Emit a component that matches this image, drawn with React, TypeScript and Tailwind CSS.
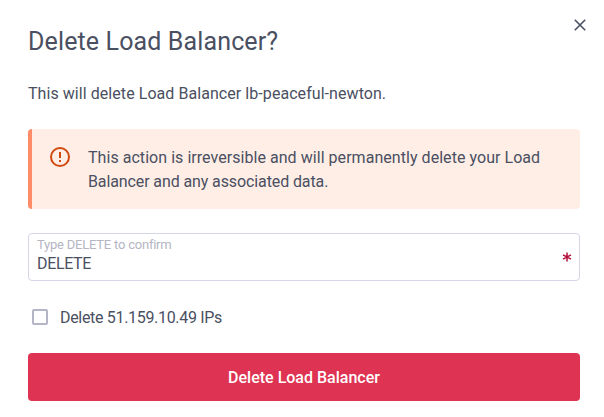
import { useState } from "react";

function CloseIcon() {
  return (
    <svg width="12" height="12" viewBox="0 0 12 12" fill="none" stroke="#4a4f62" strokeWidth="1.6">
      <path d="M0.8 0.8 11.2 11.2M11.2 0.8 0.8 11.2" />
    </svg>
  );
}

function AlertIcon() {
  return (
    <svg width="20" height="20" viewBox="0 0 20 20" fill="none" stroke="#d1490f" strokeWidth="2">
      <circle cx="10" cy="10" r="9" />
      <path d="M10 5v6M10 13v2" />
    </svg>
  );
}

export default function App() {
  const [value, setValue] = useState("DELETE");

  return (
    <div className="relative h-[417px] w-[604px] bg-white pt-[24px] pr-[24px] pl-[28px] font-['Roboto',sans-serif] text-[16px] leading-[24px] text-[#4a4f62]">
      <button aria-label="Close" className="absolute top-[19px] right-[18px]">
        <CloseIcon />
      </button>
      <h1 className="text-[25px] leading-[36px] tracking-[0.13px] whitespace-nowrap">
        <span>Delete Load Balancer?</span>
      </h1>
      <p className="mt-[22px] tracking-[0.06px] whitespace-nowrap">
        This will delete Load Balancer lb-peaceful-newton.
      </p>

      <div className="mt-[23px] flex h-[80px] rounded-[4px] border-l-4 border-[#ff8c69] bg-[#ffeee6] pt-[17px] pl-[18px]">
        <div className="mt-[1px] mr-[18px] shrink-0">
          <AlertIcon />
        </div>
        <p className="whitespace-nowrap">
          <span className="tracking-[0.045px]">This action is irreversible and will permanently delete your Load</span>
          <br />
          <span className="tracking-[-0.11px]">Balancer and any associated data.</span>
        </p>
      </div>

      <label className="mt-[24px] flex h-[48px] items-center rounded-[4px] border border-[#d4d6e8] pr-[7px] pl-[8px]">
        <span className="flex flex-1 flex-col pb-[2px]">
          <span className="text-[13px] leading-[16px] tracking-[-0.22px] text-[#b4b6c3]">Type DELETE to confirm</span>
          <input
            className="h-[22px] w-full bg-transparent leading-[22px] tracking-[-0.35px] outline-none"
            value={value}
            onChange={(e) => setValue(e.target.value)}
          />
        </span>
        <svg width="10" height="10" viewBox="0 0 10 10" stroke="#b3123c" strokeWidth="1.5">
          <path d="M5 0.5v9M1 2.8l8 4.4M9 2.8l-8 4.4" />
        </svg>
      </label>

      <label className="mt-[24px] flex h-[24px] items-center pl-[4px]">
        <input type="checkbox" className="size-[16px] appearance-none rounded-[2px] border-2 border-[#b4b6c6]" />
        <span className="ml-[12px] pt-[2px] tracking-[-0.32px]">Delete 51.159.10.49 IPs</span>
      </label>

      <button className="mt-[24px] flex h-[48px] w-full items-center justify-center rounded-[4px] bg-[#de3352] pt-[2px] font-medium text-white">
        <span>Delete Load Balancer</span>
      </button>
    </div>
  );
}
